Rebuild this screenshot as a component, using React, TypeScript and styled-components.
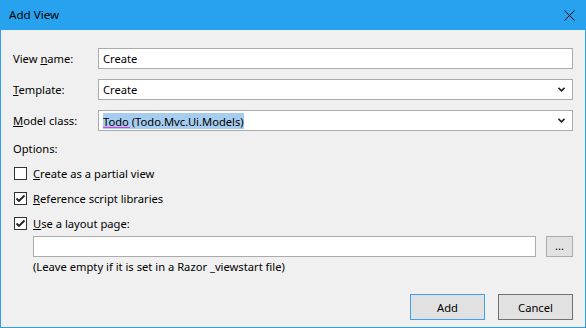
import React from 'react';
import styled, { createGlobalStyle } from 'styled-components';

const GlobalStyle = createGlobalStyle`
  html, body { margin: 0; padding: 0; background: #f0f0f0; }
  body { font-family: "Segoe UI", "Noto Sans", "Liberation Sans", sans-serif; font-size: 11.2px; color: #000; }
`;

const Window = styled.div`
  width: 586px;
  height: 328px;
  box-sizing: border-box;
  border: 1px solid #2b9fe9;
  border-top: none;
  background: #f0f0f0;
  display: flex;
  flex-direction: column;
`;

const TitleBar = styled.div`
  height: 30px;
  margin: 0 -1px;
  background: #27a2ee;
  display: flex;
  align-items: center;
  justify-content: space-between;
  padding: 0 10px 0 9px;
  flex-shrink: 0;
`;

const Title = styled.span`
  font-size: 11.6px;
  color: #000;
  padding-bottom: 2px;
`;

const CloseButton = styled.svg`
  width: 11px;
  height: 11px;
  margin-right: 1px;
`;

const Body = styled.div`
  flex: 1;
  display: flex;
  flex-direction: column;
  padding: 18px 12px 7px 12px;
`;

const FieldRow = styled.div`
  display: flex;
  align-items: center;
  height: 21px;
  margin-bottom: 10px;
`;

const Label = styled.label`
  width: 85px;
  flex-shrink: 0;
`;

const TextBox = styled.div`
  flex: 1;
  height: 21px;
  box-sizing: border-box;
  border: 1px solid #ababab;
  background: #fff;
  display: flex;
  align-items: center;
  padding: 0 4px;
`;

const Chevron = styled.svg`
  margin-left: auto;
  margin-right: 3px;
  width: 7px;
  height: 5px;
`;

const Selection = styled.span`
  background: #a6cdf0;
  padding: 1px 0 0;
  position: relative;
`;

const Squiggle = styled.span`
  position: absolute;
  left: 0;
  width: 27px;
  bottom: 1px;
  height: 1px;
  background: #e03ae0;
`;

const OptionsLabel = styled.div`
  height: 20px;
  line-height: 16px;
`;

const CheckRow = styled.div`
  display: flex;
  align-items: center;
  height: 25px;
  margin-left: 1px;
`;

const Box = styled.span`
  width: 13px;
  height: 13px;
  box-sizing: border-box;
  border: 1px solid #333;
  background: #fff;
  margin-right: 6px;
  display: flex;
  align-items: center;
  justify-content: center;
`;

const PathRow = styled.div`
  display: flex;
  align-items: center;
  margin-left: 20px;
  height: 21px;
`;

const PathBox = styled(TextBox)`
  flex: none;
  width: 503px;
`;

const BrowseButton = styled.div`
  width: 27px;
  height: 21px;
  box-sizing: border-box;
  margin-left: 10px;
  border: 1px solid #adadad;
  background: #e1e1e1;
  display: flex;
  align-items: center;
  justify-content: center;
  font-size: 11px;
  padding-bottom: 3px;
`;

const Hint = styled.div`
  margin: 1px 0 0 20px;
  height: 18px;
  line-height: 18px;
`;

const Footer = styled.div`
  margin-top: auto;
  display: flex;
  justify-content: flex-end;
  gap: 13px;
`;

const Button = styled.div<{ $default?: boolean }>`
  width: 75px;
  height: 26px;
  box-sizing: border-box;
  border: 1px solid ${(p) => (p.$default ? '#3c9ff0' : '#707070')};
  background: #e1e1e1;
  display: flex;
  align-items: center;
  justify-content: center;
`;

const CheckBox = ({ checked }: { checked?: boolean }) => (
  <Box>
    {checked && (
      <svg width="11" height="11" viewBox="0 0 11 11">
        <path d="M1.5 5.5 L4 8 L9.5 2.5" stroke="#222" strokeWidth="1.8" fill="none" />
      </svg>
    )}
  </Box>
);

const DropArrow = () => (
  <Chevron viewBox="0 0 7 5">
    <path d="M0.5 0.8 L3.5 3.8 L6.5 0.8" stroke="#222" strokeWidth="1.6" fill="none" />
  </Chevron>
);

export default function App() {
  return (
    <>
      <GlobalStyle />
      <Window>
        <TitleBar>
          <Title>Add View</Title>
          <CloseButton viewBox="0 0 11 11">
            <path d="M0.5 0.5 L10.5 10.5 M10.5 0.5 L0.5 10.5" stroke="#000" strokeWidth="1" />
          </CloseButton>
        </TitleBar>
        <Body>
          <FieldRow>
            <Label>View <u>n</u>ame:</Label>
            <TextBox>Create</TextBox>
          </FieldRow>
          <FieldRow>
            <Label><u>T</u>emplate:</Label>
            <TextBox>
              Create
              <DropArrow />
            </TextBox>
          </FieldRow>
          <FieldRow>
            <Label><u>M</u>odel class:</Label>
            <TextBox>
              <Selection>
                Todo (Todo.Mvc.Ui.Models)
                <Squiggle />
              </Selection>
              <DropArrow />
            </TextBox>
          </FieldRow>
          <OptionsLabel>Options:</OptionsLabel>
          <CheckRow>
            <CheckBox />
            <span><u>C</u>reate as a partial view</span>
          </CheckRow>
          <CheckRow>
            <CheckBox checked />
            <span><u>R</u>eference script libraries</span>
          </CheckRow>
          <CheckRow>
            <CheckBox checked />
            <span><u>U</u>se a layout page:</span>
          </CheckRow>
          <PathRow>
            <PathBox />
            <BrowseButton>...</BrowseButton>
          </PathRow>
          <Hint>(Leave empty if it is set in a Razor _viewstart file)</Hint>
          <Footer>
            <Button $default>Add</Button>
            <Button>Cancel</Button>
          </Footer>
        </Body>
      </Window>
    </>
  );
}
